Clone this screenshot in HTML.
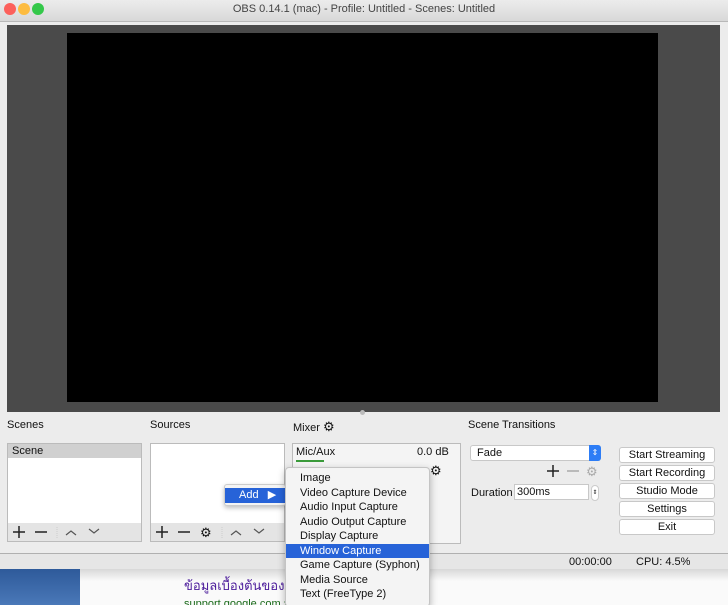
<!DOCTYPE html>
<html><head><meta charset="utf-8"><style>
*{margin:0;padding:0;box-sizing:border-box}
html,body{width:728px;height:605px;overflow:hidden}
body{position:relative;background:#ececec;font-family:"Liberation Sans",sans-serif;font-size:11px;color:#111}
.a{position:absolute}
.btn{position:absolute;left:619px;width:96px;height:16px;background:#fff;border:1px solid #c8c8c8;border-radius:3px;text-align:center;line-height:14px;font-size:11px}
.mi{position:absolute;left:14px;font-size:11px;height:14.5px;line-height:14.5px}
</style></head><body>
<div class="a" style="left:0;top:0;width:728px;height:22px;background:linear-gradient(#ececec,#d8d8d8);border-bottom:1px solid #b8b8b8"></div>
<div class="a" style="left:4px;top:3px;width:12px;height:12px;border-radius:50%;background:#fc605b"></div>
<div class="a" style="left:18px;top:3px;width:12px;height:12px;border-radius:50%;background:#fdbc40"></div>
<div class="a" style="left:32px;top:3px;width:12px;height:12px;border-radius:50%;background:#34c84a"></div>
<div class="a" style="left:0;top:3px;width:728px;text-align:center;font-size:11px;color:#444">OBS 0.14.1 (mac) - Profile: Untitled - Scenes: Untitled</div>
<div class="a" style="left:7px;top:25px;width:713px;height:387px;background:#4a4a4a"></div>
<div class="a" style="left:67px;top:33px;width:591px;height:369px;background:#000"></div>
<div class="a" style="left:360px;top:410px;width:5px;height:5px;border-radius:50%;background:#bbb"></div>
<div class="a" style="left:7px;top:419px">Scenes</div>
<div class="a" style="left:150px;top:419px">Sources</div>
<div class="a" style="left:293px;top:419px">Mixer <span style="font-size:13px">⚙</span></div>
<div class="a" style="left:468px;top:419px">Scene Transitions</div>
<!-- scenes -->
<div class="a" style="left:7px;top:443px;width:135px;height:99px;background:#fff;border:1px solid #bbb"></div>
<div class="a" style="left:8px;top:444px;width:133px;height:14px;background:#d0d0d0;padding-left:4px;line-height:14px">Scene</div>
<svg class="a" style="left:8px;top:523px" width="133" height="18"><rect width="133" height="18" fill="#e4e4e4"/><g stroke="#222" stroke-width="1.5" fill="none"><path d="M5 9h12M11 3v12M27 9h12"/></g><path d="M49 4v12" stroke="#ccc" stroke-dasharray="1 1"/><g stroke="#555" stroke-width="1.2" fill="none"><path d="M58 12l5-4 5 4M81 6l5 4 5-4"/></g></svg>
<!-- sources -->
<div class="a" style="left:150px;top:443px;width:135px;height:99px;background:#fff;border:1px solid #bbb"></div>
<svg class="a" style="left:151px;top:523px" width="133" height="18"><rect width="133" height="18" fill="#e4e4e4"/><g stroke="#222" stroke-width="1.5" fill="none"><path d="M5 9h12M11 3v12M27 9h12"/></g><text x="49" y="14" font-size="13" font-family="DejaVu Sans" fill="#111">⚙</text><path d="M71 4v12" stroke="#ccc" stroke-dasharray="1 1"/><g stroke="#555" stroke-width="1.2" fill="none"><path d="M80 12l5-4 5 4M103 6l5 4 5-4"/></g></svg>
<!-- mixer -->
<div class="a" style="left:292px;top:443px;width:169px;height:101px;background:#f4f4f4;border:1px solid #bbb"></div>
<div class="a" style="left:296px;top:446px">Mic/Aux</div>
<div class="a" style="left:417px;top:446px">0.0 dB</div>
<div class="a" style="left:296px;top:460px;width:28px;height:2px;background:#3a9a3a"></div>
<div class="a" style="left:430px;top:463px;font-size:13px">⚙</div>
<!-- transitions -->
<div class="a" style="left:470px;top:445px;width:131px;height:16px;background:#fff;border:1px solid #c8c8c8;border-radius:3px;padding-left:6px;line-height:14px">Fade</div>
<div class="a" style="left:589px;top:445px;width:12px;height:16px;background:#2d7df6;border-radius:0 3px 3px 0;color:#fff;font-size:8px;text-align:center;line-height:15px">⇕</div>
<svg class="a" style="left:544px;top:464px" width="60" height="14"><g stroke="#222" stroke-width="1.5"><path d="M3 7h12M9 1v12"/></g><path d="M23 7h12" stroke="#aaa" stroke-width="1.5"/><text x="42" y="12" font-size="13" font-family="DejaVu Sans" fill="#aaa">⚙</text></svg>
<div class="a" style="left:471px;top:487px">Duration</div>
<div class="a" style="left:514px;top:484px;width:75px;height:16px;background:#fff;border:1px solid #c8c8c8;padding-left:2px;line-height:14px">300ms</div>
<div class="a" style="left:591px;top:485px;width:8px;height:16px;border:1px solid #ccc;border-radius:4px;background:#fff;font-size:6px;text-align:center;line-height:14px">⇕</div>
<div class="btn" style="top:447px">Start Streaming</div>
<div class="btn" style="top:465px">Start Recording</div>
<div class="btn" style="top:483px">Studio Mode</div>
<div class="btn" style="top:501px">Settings</div>
<div class="btn" style="top:519px">Exit</div>
<div class="a" style="left:0;top:553px;width:728px;height:16px;border-top:1px solid #b0b0b0;background:#e6e6e6"></div>
<div class="a" style="left:569px;top:556px">00:00:00</div>
<div class="a" style="left:636px;top:556px">CPU: 4.5%</div>
<!-- background below -->
<div class="a" style="left:0;top:569px;width:728px;height:36px;background:linear-gradient(#d8d8d8,#fafafa 12px)"></div>
<div class="a" style="left:0;top:569px;width:80px;height:36px;background:linear-gradient(#2e5a9a,#4a78b8)"></div>
<div class="a" style="left:184px;top:575px;font-size:13px;color:#4a1a9a;font-family:'Liberation Sans','Noto Sans CJK SC',sans-serif">ข้อมูลเบื้องต้นของ YouTube ความช่วยเหลือ</div>
<div class="a" style="left:184px;top:594px;font-size:11px;color:#1a6a1a;font-family:'Liberation Sans','Noto Sans CJK SC',sans-serif">support.google.com › ของ YouTube ▾</div>
<!-- Add menu -->
<div class="a" style="left:224px;top:484px;width:62px;height:22px;background:#f4f4f4;border:1px solid #ccc;border-radius:3px;box-shadow:0 2px 5px rgba(0,0,0,.25)"></div>
<div class="a" style="left:225px;top:488px;width:61px;height:15px;background:#2763d8;color:#fff;line-height:15px;padding-left:14px">Add &nbsp;&nbsp;▶</div>
<!-- submenu -->
<div class="a" style="left:285px;top:467px;width:145px;height:140px;background:#f4f4f4;border:1px solid #c4c4c4;border-radius:4px;box-shadow:0 3px 8px rgba(0,0,0,.3)">
<div class="mi" style="top:3px">Image</div>
<div class="mi" style="top:17.5px">Video Capture Device</div>
<div class="mi" style="top:32px">Audio Input Capture</div>
<div class="mi" style="top:46.5px">Audio Output Capture</div>
<div class="mi" style="top:61px">Display Capture</div>
<div class="a" style="left:0;top:75.5px;width:143px;height:14.5px;background:#2763d8"></div>
<div class="mi" style="top:75.5px;color:#fff">Window Capture</div>
<div class="mi" style="top:90px">Game Capture (Syphon)</div>
<div class="mi" style="top:104.5px">Media Source</div>
<div class="mi" style="top:119px">Text (FreeType 2)</div>
</div>
</body></html>
